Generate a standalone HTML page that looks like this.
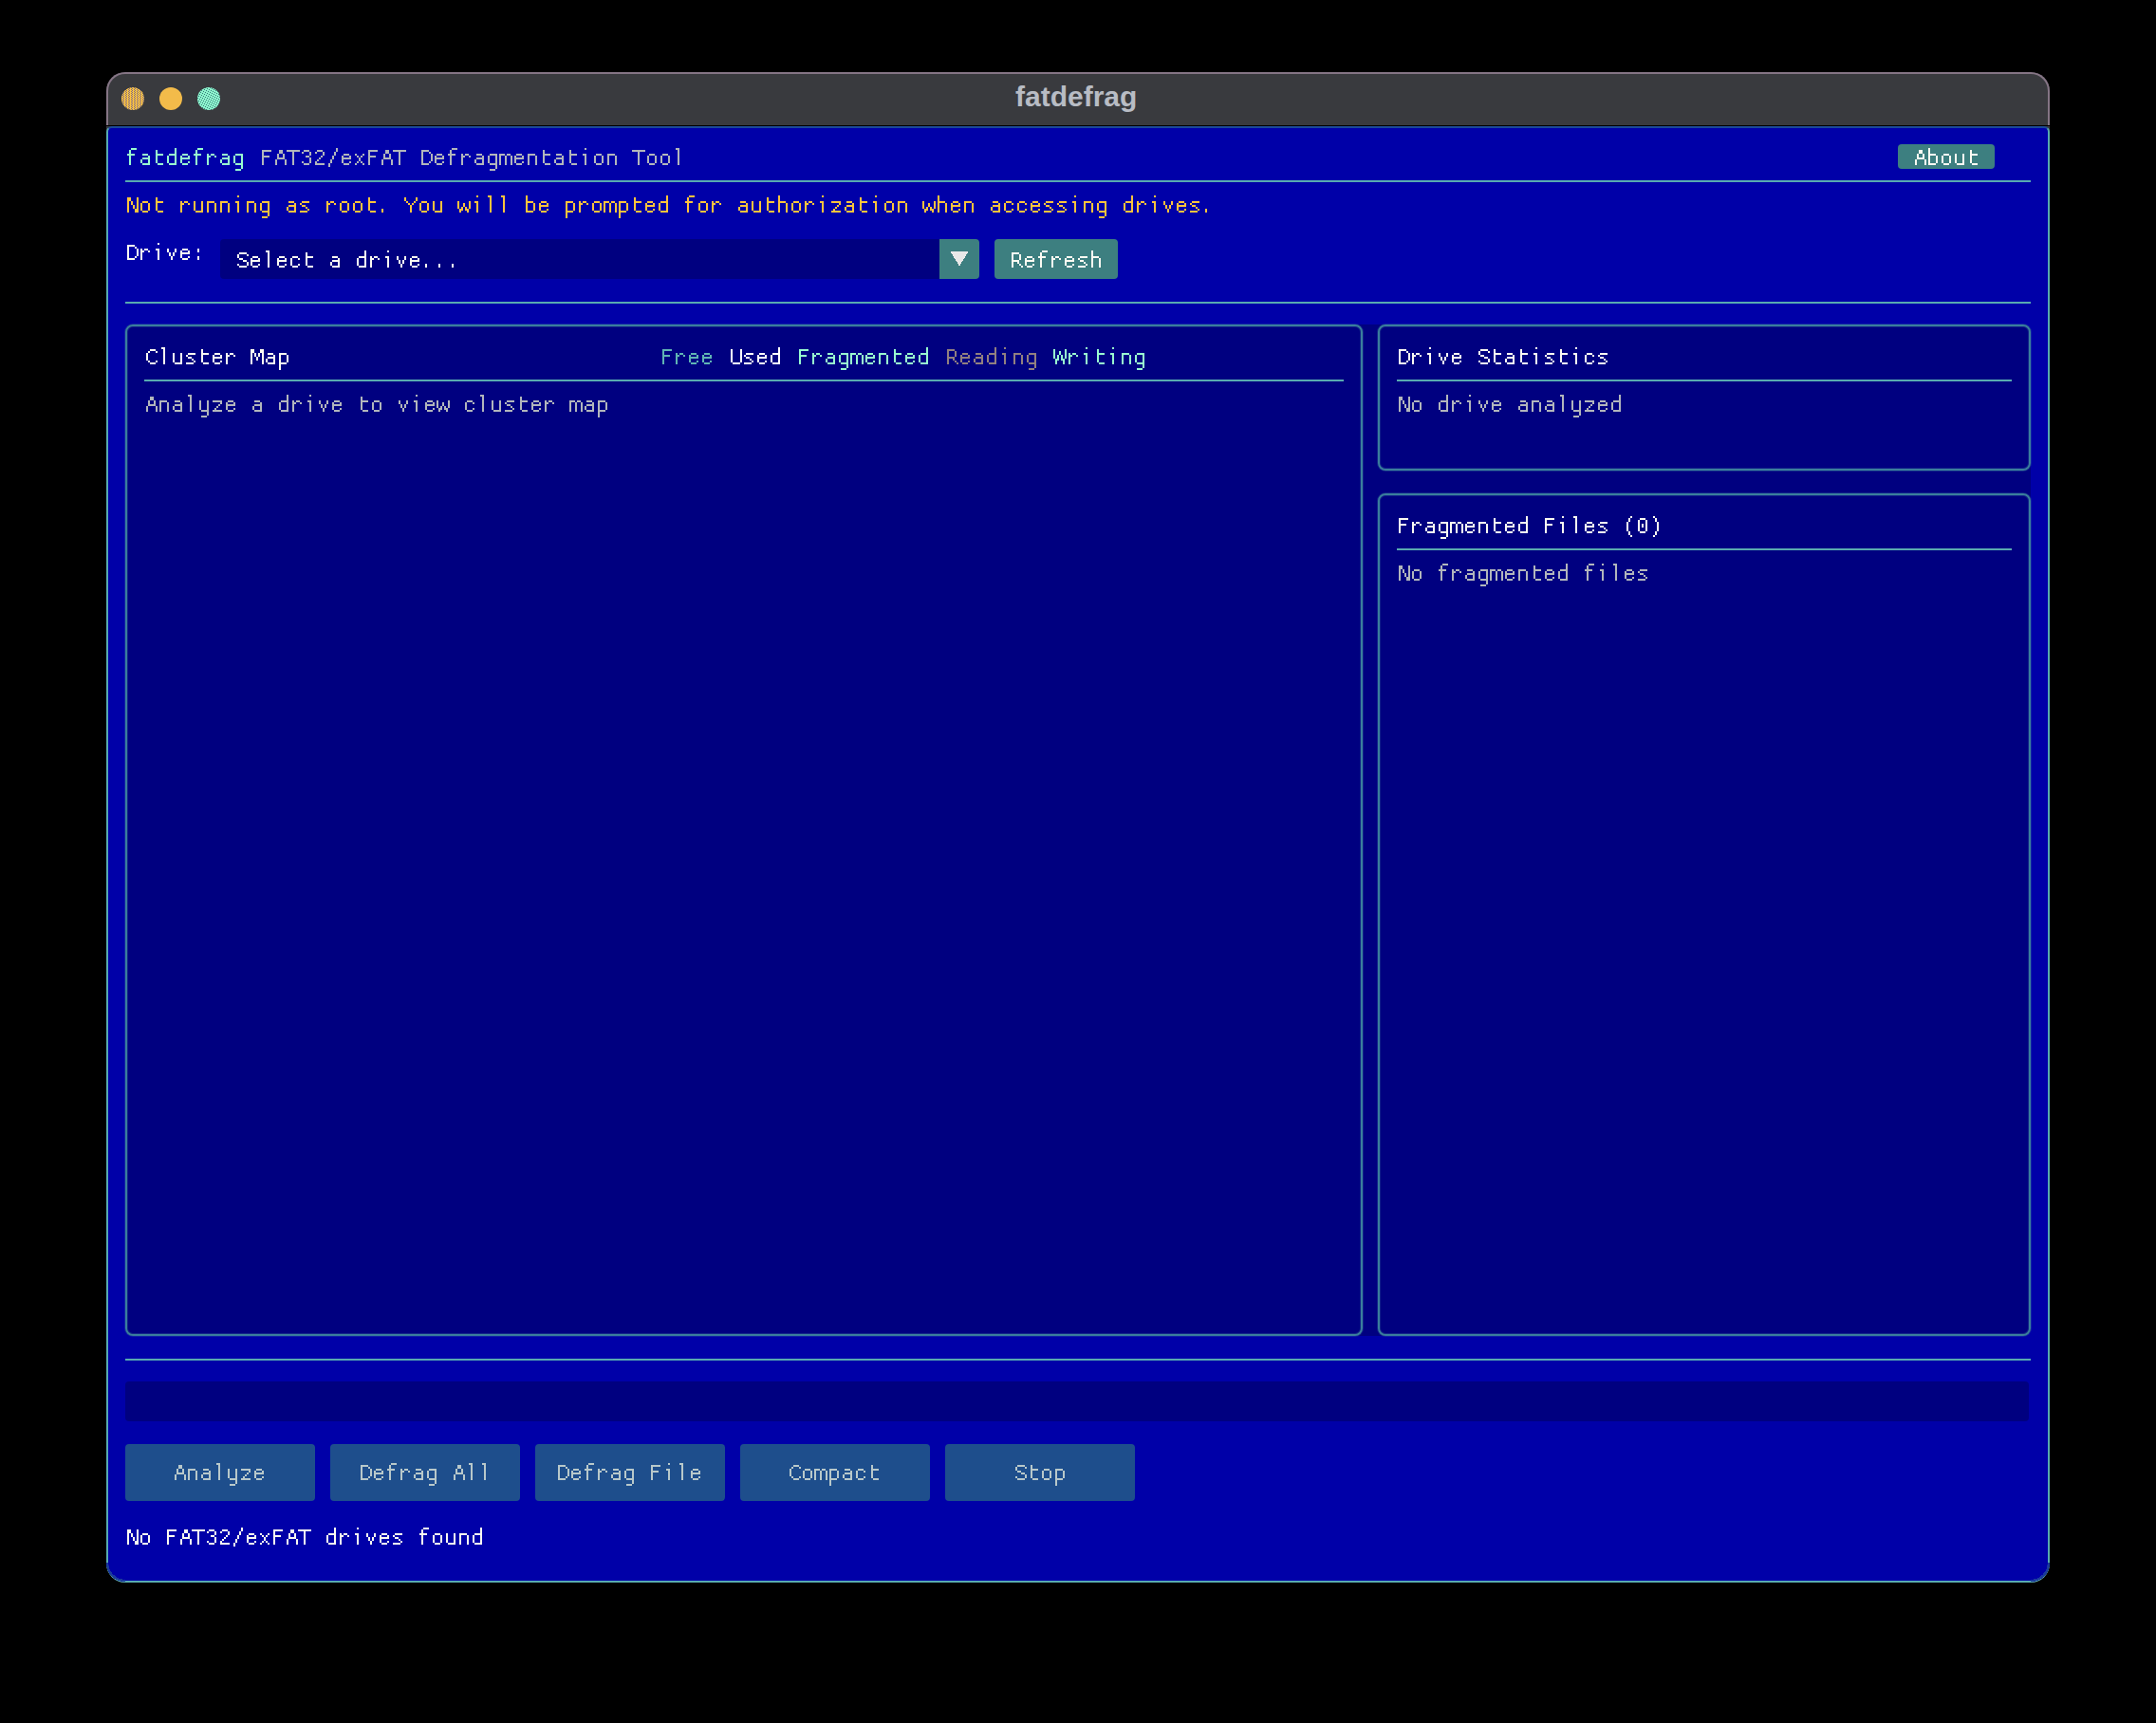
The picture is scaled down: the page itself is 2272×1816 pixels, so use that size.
<!DOCTYPE html>
<html><head><meta charset="utf-8">
<style>
html,body{margin:0;padding:0;width:2272px;height:1816px;background:#000;overflow:hidden}
*{box-sizing:border-box}
.a{position:absolute}
svg.a{shape-rendering:crispEdges;overflow:visible}
.line{position:absolute;height:2px;background:#58aab0}
.panel{position:absolute;border:2px solid #3a7e9c;box-shadow:0 0 0 1px rgba(66,136,162,0.25),inset 0 0 0 1px rgba(66,136,162,0.25);border-radius:8px;background:#000080}
.btn{position:absolute;background:#3d7f80;border-radius:4px}
.dbtn{position:absolute;background:#1e4e8c;border-radius:4px;width:200px;height:60px;top:1522px}
</style></head><body>
<svg width="0" height="0" style="position:absolute"><defs>
<path id="g78" d="M2 4h4v2h-4zM12 4h2v2h-2zM2 6h4v2h-4zM12 6h2v2h-2zM2 8h2v2h-2zM6 8h2v2h-2zM12 8h2v2h-2zM2 10h2v2h-2zM6 10h2v2h-2zM12 10h2v2h-2zM2 12h2v2h-2zM8 12h2v2h-2zM12 12h2v2h-2zM2 14h2v2h-2zM8 14h2v2h-2zM12 14h2v2h-2zM2 16h2v2h-2zM10 16h4v2h-4zM2 18h2v2h-2zM10 18h4v2h-4z"/>
<path id="g111" d="M4 8h6v2h-6zM2 10h2v2h-2zM10 10h2v2h-2zM2 12h2v2h-2zM10 12h2v2h-2zM2 14h2v2h-2zM10 14h2v2h-2zM2 16h2v2h-2zM10 16h2v2h-2zM4 18h6v2h-6z"/>
<path id="g116" d="M4 4h2v2h-2zM4 6h2v2h-2zM4 8h8v2h-8zM4 10h2v2h-2zM4 12h2v2h-2zM4 14h2v2h-2zM4 16h2v2h-2zM6 18h6v2h-6z"/>
<path id="g114" d="M2 8h2v2h-2zM6 8h4v2h-4zM2 10h4v2h-4zM10 10h2v2h-2zM2 12h2v2h-2zM2 14h2v2h-2zM2 16h2v2h-2zM2 18h2v2h-2z"/>
<path id="g117" d="M2 8h2v2h-2zM10 8h2v2h-2zM2 10h2v2h-2zM10 10h2v2h-2zM2 12h2v2h-2zM10 12h2v2h-2zM2 14h2v2h-2zM10 14h2v2h-2zM2 16h2v2h-2zM10 16h2v2h-2zM4 18h8v2h-8z"/>
<path id="g110" d="M2 8h8v2h-8zM2 10h2v2h-2zM10 10h2v2h-2zM2 12h2v2h-2zM10 12h2v2h-2zM2 14h2v2h-2zM10 14h2v2h-2zM2 16h2v2h-2zM10 16h2v2h-2zM2 18h2v2h-2zM10 18h2v2h-2z"/>
<path id="g105" d="M6 2h2v2h-2zM4 8h4v2h-4zM6 10h2v2h-2zM6 12h2v2h-2zM6 14h2v2h-2zM6 16h2v2h-2zM6 18h2v2h-2z"/>
<path id="g103" d="M4 8h8v2h-8zM2 10h2v2h-2zM10 10h2v2h-2zM2 12h2v2h-2zM10 12h2v2h-2zM2 14h2v2h-2zM10 14h2v2h-2zM2 16h2v2h-2zM10 16h2v2h-2zM4 18h8v2h-8zM10 20h2v2h-2zM10 22h2v2h-2zM4 24h6v2h-6z"/>
<path id="g97" d="M4 8h6v2h-6zM10 10h2v2h-2zM4 12h8v2h-8zM2 14h2v2h-2zM10 14h2v2h-2zM2 16h2v2h-2zM10 16h2v2h-2zM4 18h8v2h-8z"/>
<path id="g115" d="M4 8h8v2h-8zM2 10h2v2h-2zM4 12h4v2h-4zM8 14h2v2h-2zM10 16h2v2h-2zM2 18h8v2h-8z"/>
<path id="g46" d="M4 16h2v2h-2zM4 18h2v2h-2z"/>
<path id="g89" d="M0 4h2v2h-2zM12 4h2v2h-2zM0 6h2v2h-2zM12 6h2v2h-2zM2 8h2v2h-2zM10 8h2v2h-2zM4 10h2v2h-2zM8 10h2v2h-2zM6 12h2v2h-2zM6 14h2v2h-2zM6 16h2v2h-2zM6 18h2v2h-2z"/>
<path id="g119" d="M0 8h2v2h-2zM12 8h2v2h-2zM0 10h2v2h-2zM6 10h2v2h-2zM12 10h2v2h-2zM0 12h2v2h-2zM6 12h2v2h-2zM12 12h2v2h-2zM0 14h2v2h-2zM4 14h2v2h-2zM8 14h2v2h-2zM12 14h2v2h-2zM2 16h4v2h-4zM8 16h4v2h-4zM2 18h2v2h-2zM10 18h2v2h-2z"/>
<path id="g108" d="M4 2h4v2h-4zM6 4h2v2h-2zM6 6h2v2h-2zM6 8h2v2h-2zM6 10h2v2h-2zM6 12h2v2h-2zM6 14h2v2h-2zM6 16h2v2h-2zM6 18h2v2h-2z"/>
<path id="g98" d="M2 2h2v2h-2zM2 4h2v2h-2zM2 6h2v2h-2zM2 8h8v2h-8zM2 10h2v2h-2zM10 10h2v2h-2zM2 12h2v2h-2zM10 12h2v2h-2zM2 14h2v2h-2zM10 14h2v2h-2zM2 16h2v2h-2zM10 16h2v2h-2zM2 18h8v2h-8z"/>
<path id="g101" d="M4 8h6v2h-6zM2 10h2v2h-2zM10 10h2v2h-2zM2 12h10v2h-10zM2 14h2v2h-2zM2 16h2v2h-2zM10 16h2v2h-2zM4 18h6v2h-6z"/>
<path id="g112" d="M2 8h8v2h-8zM2 10h2v2h-2zM10 10h2v2h-2zM2 12h2v2h-2zM10 12h2v2h-2zM2 14h2v2h-2zM10 14h2v2h-2zM2 16h2v2h-2zM10 16h2v2h-2zM2 18h8v2h-8zM2 20h2v2h-2zM2 22h2v2h-2zM2 24h2v2h-2z"/>
<path id="g109" d="M0 8h6v2h-6zM8 8h4v2h-4zM0 10h2v2h-2zM6 10h2v2h-2zM12 10h2v2h-2zM0 12h2v2h-2zM6 12h2v2h-2zM12 12h2v2h-2zM0 14h2v2h-2zM6 14h2v2h-2zM12 14h2v2h-2zM0 16h2v2h-2zM6 16h2v2h-2zM12 16h2v2h-2zM0 18h2v2h-2zM6 18h2v2h-2zM12 18h2v2h-2z"/>
<path id="g100" d="M10 2h2v2h-2zM10 4h2v2h-2zM10 6h2v2h-2zM4 8h8v2h-8zM2 10h2v2h-2zM10 10h2v2h-2zM2 12h2v2h-2zM10 12h2v2h-2zM2 14h2v2h-2zM10 14h2v2h-2zM2 16h2v2h-2zM10 16h2v2h-2zM4 18h8v2h-8z"/>
<path id="g102" d="M6 2h6v2h-6zM4 4h2v2h-2zM4 6h2v2h-2zM2 8h8v2h-8zM4 10h2v2h-2zM4 12h2v2h-2zM4 14h2v2h-2zM4 16h2v2h-2zM4 18h2v2h-2z"/>
<path id="g104" d="M2 2h2v2h-2zM2 4h2v2h-2zM2 6h2v2h-2zM2 8h8v2h-8zM2 10h2v2h-2zM10 10h2v2h-2zM2 12h2v2h-2zM10 12h2v2h-2zM2 14h2v2h-2zM10 14h2v2h-2zM2 16h2v2h-2zM10 16h2v2h-2zM2 18h2v2h-2zM10 18h2v2h-2z"/>
<path id="g122" d="M2 8h10v2h-10zM10 10h2v2h-2zM8 12h2v2h-2zM6 14h2v2h-2zM4 16h2v2h-2zM2 18h10v2h-10z"/>
<path id="g99" d="M4 8h6v2h-6zM2 10h2v2h-2zM10 10h2v2h-2zM2 12h2v2h-2zM2 14h2v2h-2zM2 16h2v2h-2zM10 16h2v2h-2zM4 18h6v2h-6z"/>
<path id="g118" d="M2 8h2v2h-2zM10 8h2v2h-2zM2 10h2v2h-2zM10 10h2v2h-2zM4 12h2v2h-2zM8 12h2v2h-2zM4 14h2v2h-2zM8 14h2v2h-2zM6 16h2v2h-2zM6 18h2v2h-2z"/>
<path id="g70" d="M2 4h10v2h-10zM2 6h2v2h-2zM2 8h2v2h-2zM2 10h8v2h-8zM2 12h2v2h-2zM2 14h2v2h-2zM2 16h2v2h-2zM2 18h2v2h-2z"/>
<path id="g65" d="M6 4h4v2h-4zM6 6h4v2h-4zM4 8h2v2h-2zM10 8h2v2h-2zM4 10h2v2h-2zM10 10h2v2h-2zM4 12h8v2h-8zM2 14h2v2h-2zM12 14h2v2h-2zM2 16h2v2h-2zM12 16h2v2h-2zM2 18h2v2h-2zM12 18h2v2h-2z"/>
<path id="g84" d="M0 4h14v2h-14zM6 6h2v2h-2zM6 8h2v2h-2zM6 10h2v2h-2zM6 12h2v2h-2zM6 14h2v2h-2zM6 16h2v2h-2zM6 18h2v2h-2z"/>
<path id="g51" d="M4 4h6v2h-6zM2 6h2v2h-2zM10 6h2v2h-2zM10 8h2v2h-2zM6 10h4v2h-4zM10 12h2v2h-2zM10 14h2v2h-2zM2 16h2v2h-2zM10 16h2v2h-2zM4 18h6v2h-6z"/>
<path id="g50" d="M4 4h6v2h-6zM2 6h2v2h-2zM10 6h2v2h-2zM10 8h2v2h-2zM8 10h2v2h-2zM6 12h2v2h-2zM4 14h2v2h-2zM2 16h2v2h-2zM2 18h10v2h-10z"/>
<path id="g47" d="M10 2h2v2h-2zM10 4h2v2h-2zM8 6h2v2h-2zM8 8h2v2h-2zM6 10h2v2h-2zM6 12h2v2h-2zM4 14h2v2h-2zM4 16h2v2h-2zM2 18h2v2h-2zM2 20h2v2h-2z"/>
<path id="g120" d="M2 8h2v2h-2zM10 8h2v2h-2zM4 10h2v2h-2zM8 10h2v2h-2zM6 12h2v2h-2zM6 14h2v2h-2zM4 16h2v2h-2zM8 16h2v2h-2zM2 18h2v2h-2zM10 18h2v2h-2z"/>
<path id="g68" d="M2 4h8v2h-8zM2 6h2v2h-2zM10 6h2v2h-2zM2 8h2v2h-2zM12 8h2v2h-2zM2 10h2v2h-2zM12 10h2v2h-2zM2 12h2v2h-2zM12 12h2v2h-2zM2 14h2v2h-2zM12 14h2v2h-2zM2 16h2v2h-2zM10 16h2v2h-2zM2 18h8v2h-8z"/>
<path id="g67" d="M6 4h6v2h-6zM4 6h2v2h-2zM12 6h2v2h-2zM2 8h2v2h-2zM2 10h2v2h-2zM2 12h2v2h-2zM2 14h2v2h-2zM4 16h2v2h-2zM12 16h2v2h-2zM6 18h6v2h-6z"/>
<path id="g77" d="M0 4h4v2h-4zM10 4h4v2h-4zM0 6h4v2h-4zM10 6h4v2h-4zM0 8h2v2h-2zM4 8h2v2h-2zM8 8h2v2h-2zM12 8h2v2h-2zM0 10h2v2h-2zM4 10h2v2h-2zM8 10h2v2h-2zM12 10h2v2h-2zM0 12h2v2h-2zM6 12h2v2h-2zM12 12h2v2h-2zM0 14h2v2h-2zM6 14h2v2h-2zM12 14h2v2h-2zM0 16h2v2h-2zM12 16h2v2h-2zM0 18h2v2h-2zM12 18h2v2h-2z"/>
<path id="g85" d="M2 4h2v2h-2zM12 4h2v2h-2zM2 6h2v2h-2zM12 6h2v2h-2zM2 8h2v2h-2zM12 8h2v2h-2zM2 10h2v2h-2zM12 10h2v2h-2zM2 12h2v2h-2zM12 12h2v2h-2zM2 14h2v2h-2zM12 14h2v2h-2zM2 16h2v2h-2zM12 16h2v2h-2zM4 18h8v2h-8z"/>
<path id="g82" d="M2 4h8v2h-8zM2 6h2v2h-2zM10 6h2v2h-2zM2 8h2v2h-2zM10 8h2v2h-2zM2 10h2v2h-2zM10 10h2v2h-2zM2 12h8v2h-8zM2 14h2v2h-2zM8 14h2v2h-2zM2 16h2v2h-2zM10 16h2v2h-2zM2 18h2v2h-2zM12 18h2v2h-2z"/>
<path id="g87" d="M0 4h2v2h-2zM12 4h2v2h-2zM0 6h2v2h-2zM6 6h2v2h-2zM12 6h2v2h-2zM0 8h2v2h-2zM6 8h2v2h-2zM12 8h2v2h-2zM0 10h2v2h-2zM4 10h2v2h-2zM8 10h2v2h-2zM12 10h2v2h-2zM0 12h2v2h-2zM4 12h2v2h-2zM8 12h2v2h-2zM12 12h2v2h-2zM2 14h4v2h-4zM8 14h4v2h-4zM2 16h2v2h-2zM10 16h2v2h-2zM2 18h2v2h-2zM10 18h2v2h-2z"/>
<path id="g83" d="M4 4h8v2h-8zM2 6h2v2h-2zM12 6h2v2h-2zM2 8h2v2h-2zM4 10h4v2h-4zM8 12h4v2h-4zM12 14h2v2h-2zM2 16h2v2h-2zM12 16h2v2h-2zM4 18h8v2h-8z"/>
<path id="g40" d="M8 2h2v2h-2zM6 4h2v2h-2zM6 6h2v2h-2zM4 8h2v2h-2zM4 10h2v2h-2zM4 12h2v2h-2zM4 14h2v2h-2zM4 16h2v2h-2zM6 18h2v2h-2zM6 20h2v2h-2zM8 22h2v2h-2z"/>
<path id="g41" d="M4 2h2v2h-2zM6 4h2v2h-2zM6 6h2v2h-2zM8 8h2v2h-2zM8 10h2v2h-2zM8 12h2v2h-2zM8 14h2v2h-2zM8 16h2v2h-2zM6 18h2v2h-2zM6 20h2v2h-2zM4 22h2v2h-2z"/>
<path id="g48" d="M4 4h6v2h-6zM2 6h2v2h-2zM10 6h2v2h-2zM2 8h2v2h-2zM10 8h2v2h-2zM2 10h2v2h-2zM6 10h2v2h-2zM10 10h2v2h-2zM2 12h2v2h-2zM6 12h2v2h-2zM10 12h2v2h-2zM2 14h2v2h-2zM10 14h2v2h-2zM2 16h2v2h-2zM10 16h2v2h-2zM4 18h6v2h-6z"/>
<path id="g58" d="M6 8h2v2h-2zM6 10h2v2h-2zM6 16h2v2h-2zM6 18h2v2h-2z"/>
<path id="g121" d="M2 8h2v2h-2zM10 8h2v2h-2zM2 10h2v2h-2zM10 10h2v2h-2zM2 12h2v2h-2zM10 12h2v2h-2zM2 14h2v2h-2zM10 14h2v2h-2zM2 16h2v2h-2zM10 16h2v2h-2zM4 18h8v2h-8zM10 20h2v2h-2zM10 22h2v2h-2zM4 24h6v2h-6z"/>
</defs></svg>
<!-- window -->
<div class="a" style="left:112px;top:76px;width:2048px;height:1592px;border-radius:20px;background:#393a3e"></div>
<div class="a" style="left:112px;top:76px;width:2048px;height:56px;border:2px solid #857585;border-bottom:none;border-radius:20px 20px 0 0;background:#393a3e"></div>
<div class="a" style="left:1070px;top:85px;font-family:'Liberation Sans',sans-serif;font-weight:bold;font-size:30px;line-height:34px;color:#b8bcc4">fatdefrag</div>
<!-- traffic lights -->
<svg class="a" style="left:120px;top:84px;shape-rendering:auto" width="120" height="40">
<defs>
<pattern id="zz" width="3" height="4" patternUnits="userSpaceOnUse">
<rect width="3" height="4" fill="#ffc43e"/>
<rect x="0" y="0" width="1" height="1" fill="#7a6a8a"/><rect x="1" y="1" width="1" height="1" fill="#7a6a8a"/><rect x="0" y="2" width="1" height="1" fill="#7a6a8a"/><rect x="1" y="3" width="1" height="1" fill="#7a6a8a"/>
</pattern>
<pattern id="dd" width="5" height="5" patternUnits="userSpaceOnUse">
<rect width="5" height="5" fill="#8cf4cc"/>
<rect x="0" y="0" width="1" height="1" fill="#3a7a7c"/><rect x="2" y="1" width="1" height="1" fill="#3a7a7c"/><rect x="4" y="2" width="1" height="1" fill="#3a7a7c"/><rect x="1" y="3" width="1" height="1" fill="#3a7a7c"/><rect x="3" y="4" width="1" height="1" fill="#3a7a7c"/>
</pattern>
</defs>
<circle cx="20" cy="20" r="12" fill="url(#zz)"/>
<circle cx="60" cy="20" r="12" fill="#f3bb4a"/>
<circle cx="100" cy="20" r="12" fill="url(#dd)"/>
</svg>
<div class="a" style="left:112px;top:132px;width:2048px;height:1px;background:#000"></div>
<!-- content -->
<div class="a" style="left:112px;top:133px;width:2048px;height:1535px;background:#0000a8;border:2px solid #58aab0;border-top-color:#1c4a98;border-radius:6px 6px 20px 20px"></div>

<div class="btn" style="left:2000px;top:152px;width:102px;height:26px"></div>
<div class="line" style="left:132px;top:190px;width:2008px"></div>
<div class="a" style="left:232px;top:252px;width:800px;height:42px;background:#000080;border-radius:4px"></div>
<div class="btn" style="left:990px;top:252px;width:42px;height:42px;border-radius:0 4px 4px 0"></div>
<svg class="a" style="left:990px;top:252px" width="42" height="42"><polygon points="11.5,13 30.5,13 21,28.5" fill="#e8e8e8"/></svg>
<div class="btn" style="left:1048px;top:252px;width:130px;height:42px"></div>
<div class="line" style="left:132px;top:318px;width:2008px"></div>

<div class="a" style="left:132px;top:342px;width:2008px;height:1066px;background:#000080;border-radius:8px"></div>
<div class="panel" style="left:132px;top:342px;width:1304px;height:1066px"></div>
<div class="panel" style="left:1452px;top:342px;width:688px;height:154px"></div>
<div class="panel" style="left:1452px;top:520px;width:688px;height:888px"></div>
<div class="line" style="left:152px;top:400px;width:1264px"></div>
<div class="line" style="left:1472px;top:400px;width:648px"></div>
<div class="line" style="left:1472px;top:578px;width:648px"></div>

<div class="line" style="left:132px;top:1432px;width:2008px"></div>
<div class="a" style="left:132px;top:1456px;width:2006px;height:42px;background:#000080;border-radius:4px"></div>
<div class="dbtn" style="left:132px"></div>
<div class="dbtn" style="left:348px"></div>
<div class="dbtn" style="left:564px"></div>
<div class="dbtn" style="left:780px"></div>
<div class="dbtn" style="left:996px"></div>
<svg class="a" style="left:112px;top:1647px" width="22" height="22"><path d="M1 0 A19 19 0 0 0 20 19" fill="none" stroke="#1a3a9c" stroke-width="2.4"/></svg>
<svg class="a" style="left:2138px;top:1647px" width="22" height="22"><path d="M21 0 A19 19 0 0 1 2 19" fill="none" stroke="#1a3a9c" stroke-width="2.4"/></svg>
<svg class="a" style="left:132px;top:154px" width="126" height="26" fill="#98fcd0"><use href="#g102" x="0"/><use href="#g97" x="14"/><use href="#g116" x="28"/><use href="#g100" x="42"/><use href="#g101" x="56"/><use href="#g102" x="70"/><use href="#g114" x="84"/><use href="#g97" x="98"/><use href="#g103" x="112"/></svg>
<svg class="a" style="left:274px;top:154px" width="448" height="26" fill="#b2b6bc"><use href="#g70" x="0"/><use href="#g65" x="14"/><use href="#g84" x="28"/><use href="#g51" x="42"/><use href="#g50" x="56"/><use href="#g47" x="70"/><use href="#g101" x="84"/><use href="#g120" x="98"/><use href="#g70" x="112"/><use href="#g65" x="126"/><use href="#g84" x="140"/><use href="#g68" x="168"/><use href="#g101" x="182"/><use href="#g102" x="196"/><use href="#g114" x="210"/><use href="#g97" x="224"/><use href="#g103" x="238"/><use href="#g109" x="252"/><use href="#g101" x="266"/><use href="#g110" x="280"/><use href="#g116" x="294"/><use href="#g97" x="308"/><use href="#g116" x="322"/><use href="#g105" x="336"/><use href="#g111" x="350"/><use href="#g110" x="364"/><use href="#g84" x="392"/><use href="#g111" x="406"/><use href="#g111" x="420"/><use href="#g108" x="434"/></svg>
<svg class="a" style="left:2016px;top:154px" width="70" height="26" fill="#fbfaf2"><use href="#g65" x="0"/><use href="#g98" x="14"/><use href="#g111" x="28"/><use href="#g117" x="42"/><use href="#g116" x="56"/></svg>
<svg class="a" style="left:132px;top:204px" width="1148" height="26" fill="#ffc43c"><use href="#g78" x="0"/><use href="#g111" x="14"/><use href="#g116" x="28"/><use href="#g114" x="56"/><use href="#g117" x="70"/><use href="#g110" x="84"/><use href="#g110" x="98"/><use href="#g105" x="112"/><use href="#g110" x="126"/><use href="#g103" x="140"/><use href="#g97" x="168"/><use href="#g115" x="182"/><use href="#g114" x="210"/><use href="#g111" x="224"/><use href="#g111" x="238"/><use href="#g116" x="252"/><use href="#g46" x="266"/><use href="#g89" x="294"/><use href="#g111" x="308"/><use href="#g117" x="322"/><use href="#g119" x="350"/><use href="#g105" x="364"/><use href="#g108" x="378"/><use href="#g108" x="392"/><use href="#g98" x="420"/><use href="#g101" x="434"/><use href="#g112" x="462"/><use href="#g114" x="476"/><use href="#g111" x="490"/><use href="#g109" x="504"/><use href="#g112" x="518"/><use href="#g116" x="532"/><use href="#g101" x="546"/><use href="#g100" x="560"/><use href="#g102" x="588"/><use href="#g111" x="602"/><use href="#g114" x="616"/><use href="#g97" x="644"/><use href="#g117" x="658"/><use href="#g116" x="672"/><use href="#g104" x="686"/><use href="#g111" x="700"/><use href="#g114" x="714"/><use href="#g105" x="728"/><use href="#g122" x="742"/><use href="#g97" x="756"/><use href="#g116" x="770"/><use href="#g105" x="784"/><use href="#g111" x="798"/><use href="#g110" x="812"/><use href="#g119" x="840"/><use href="#g104" x="854"/><use href="#g101" x="868"/><use href="#g110" x="882"/><use href="#g97" x="910"/><use href="#g99" x="924"/><use href="#g99" x="938"/><use href="#g101" x="952"/><use href="#g115" x="966"/><use href="#g115" x="980"/><use href="#g105" x="994"/><use href="#g110" x="1008"/><use href="#g103" x="1022"/><use href="#g100" x="1050"/><use href="#g114" x="1064"/><use href="#g105" x="1078"/><use href="#g118" x="1092"/><use href="#g101" x="1106"/><use href="#g115" x="1120"/><use href="#g46" x="1134"/></svg>
<svg class="a" style="left:132px;top:254px" width="84" height="26" fill="#fbfaf2"><use href="#g68" x="0"/><use href="#g114" x="14"/><use href="#g105" x="28"/><use href="#g118" x="42"/><use href="#g101" x="56"/><use href="#g58" x="70"/></svg>
<svg class="a" style="left:248px;top:262px" width="238" height="26" fill="#fbfaf2"><use href="#g83" x="0"/><use href="#g101" x="14"/><use href="#g108" x="28"/><use href="#g101" x="42"/><use href="#g99" x="56"/><use href="#g116" x="70"/><use href="#g97" x="98"/><use href="#g100" x="126"/><use href="#g114" x="140"/><use href="#g105" x="154"/><use href="#g118" x="168"/><use href="#g101" x="182"/><use href="#g46" x="196"/><use href="#g46" x="210"/><use href="#g46" x="224"/></svg>
<svg class="a" style="left:1064px;top:262px" width="98" height="26" fill="#fbfaf2"><use href="#g82" x="0"/><use href="#g101" x="14"/><use href="#g102" x="28"/><use href="#g114" x="42"/><use href="#g101" x="56"/><use href="#g115" x="70"/><use href="#g104" x="84"/></svg>
<svg class="a" style="left:152px;top:364px" width="154" height="26" fill="#fbfaf2"><use href="#g67" x="0"/><use href="#g108" x="14"/><use href="#g117" x="28"/><use href="#g115" x="42"/><use href="#g116" x="56"/><use href="#g101" x="70"/><use href="#g114" x="84"/><use href="#g77" x="112"/><use href="#g97" x="126"/><use href="#g112" x="140"/></svg>
<svg class="a" style="left:696px;top:364px" width="56" height="26" fill="#60b4b4"><use href="#g70" x="0"/><use href="#g114" x="14"/><use href="#g101" x="28"/><use href="#g101" x="42"/></svg>
<svg class="a" style="left:768px;top:364px" width="56" height="26" fill="#ffffff"><use href="#g85" x="0"/><use href="#g115" x="14"/><use href="#g101" x="28"/><use href="#g100" x="42"/></svg>
<svg class="a" style="left:840px;top:364px" width="140" height="26" fill="#98fcd0"><use href="#g70" x="0"/><use href="#g114" x="14"/><use href="#g97" x="28"/><use href="#g103" x="42"/><use href="#g109" x="56"/><use href="#g101" x="70"/><use href="#g110" x="84"/><use href="#g116" x="98"/><use href="#g101" x="112"/><use href="#g100" x="126"/></svg>
<svg class="a" style="left:996px;top:364px" width="98" height="26" fill="#918080"><use href="#g82" x="0"/><use href="#g101" x="14"/><use href="#g97" x="28"/><use href="#g100" x="42"/><use href="#g105" x="56"/><use href="#g110" x="70"/><use href="#g103" x="84"/></svg>
<svg class="a" style="left:1110px;top:364px" width="98" height="26" fill="#98fcd0"><use href="#g87" x="0"/><use href="#g114" x="14"/><use href="#g105" x="28"/><use href="#g116" x="42"/><use href="#g105" x="56"/><use href="#g110" x="70"/><use href="#g103" x="84"/></svg>
<svg class="a" style="left:152px;top:414px" width="490" height="26" fill="#b2b6bc"><use href="#g65" x="0"/><use href="#g110" x="14"/><use href="#g97" x="28"/><use href="#g108" x="42"/><use href="#g121" x="56"/><use href="#g122" x="70"/><use href="#g101" x="84"/><use href="#g97" x="112"/><use href="#g100" x="140"/><use href="#g114" x="154"/><use href="#g105" x="168"/><use href="#g118" x="182"/><use href="#g101" x="196"/><use href="#g116" x="224"/><use href="#g111" x="238"/><use href="#g118" x="266"/><use href="#g105" x="280"/><use href="#g101" x="294"/><use href="#g119" x="308"/><use href="#g99" x="336"/><use href="#g108" x="350"/><use href="#g117" x="364"/><use href="#g115" x="378"/><use href="#g116" x="392"/><use href="#g101" x="406"/><use href="#g114" x="420"/><use href="#g109" x="448"/><use href="#g97" x="462"/><use href="#g112" x="476"/></svg>
<svg class="a" style="left:1472px;top:364px" width="224" height="26" fill="#fbfaf2"><use href="#g68" x="0"/><use href="#g114" x="14"/><use href="#g105" x="28"/><use href="#g118" x="42"/><use href="#g101" x="56"/><use href="#g83" x="84"/><use href="#g116" x="98"/><use href="#g97" x="112"/><use href="#g116" x="126"/><use href="#g105" x="140"/><use href="#g115" x="154"/><use href="#g116" x="168"/><use href="#g105" x="182"/><use href="#g99" x="196"/><use href="#g115" x="210"/></svg>
<svg class="a" style="left:1472px;top:414px" width="238" height="26" fill="#b2b6bc"><use href="#g78" x="0"/><use href="#g111" x="14"/><use href="#g100" x="42"/><use href="#g114" x="56"/><use href="#g105" x="70"/><use href="#g118" x="84"/><use href="#g101" x="98"/><use href="#g97" x="126"/><use href="#g110" x="140"/><use href="#g97" x="154"/><use href="#g108" x="168"/><use href="#g121" x="182"/><use href="#g122" x="196"/><use href="#g101" x="210"/><use href="#g100" x="224"/></svg>
<svg class="a" style="left:1472px;top:542px" width="280" height="26" fill="#fbfaf2"><use href="#g70" x="0"/><use href="#g114" x="14"/><use href="#g97" x="28"/><use href="#g103" x="42"/><use href="#g109" x="56"/><use href="#g101" x="70"/><use href="#g110" x="84"/><use href="#g116" x="98"/><use href="#g101" x="112"/><use href="#g100" x="126"/><use href="#g70" x="154"/><use href="#g105" x="168"/><use href="#g108" x="182"/><use href="#g101" x="196"/><use href="#g115" x="210"/><use href="#g40" x="238"/><use href="#g48" x="252"/><use href="#g41" x="266"/></svg>
<svg class="a" style="left:1472px;top:592px" width="266" height="26" fill="#b2b6bc"><use href="#g78" x="0"/><use href="#g111" x="14"/><use href="#g102" x="42"/><use href="#g114" x="56"/><use href="#g97" x="70"/><use href="#g103" x="84"/><use href="#g109" x="98"/><use href="#g101" x="112"/><use href="#g110" x="126"/><use href="#g116" x="140"/><use href="#g101" x="154"/><use href="#g100" x="168"/><use href="#g102" x="196"/><use href="#g105" x="210"/><use href="#g108" x="224"/><use href="#g101" x="238"/><use href="#g115" x="252"/></svg>
<svg class="a" style="left:182px;top:1540px" width="98" height="26" fill="#b8c8ca"><use href="#g65" x="0"/><use href="#g110" x="14"/><use href="#g97" x="28"/><use href="#g108" x="42"/><use href="#g121" x="56"/><use href="#g122" x="70"/><use href="#g101" x="84"/></svg>
<svg class="a" style="left:378px;top:1540px" width="140" height="26" fill="#b8c8ca"><use href="#g68" x="0"/><use href="#g101" x="14"/><use href="#g102" x="28"/><use href="#g114" x="42"/><use href="#g97" x="56"/><use href="#g103" x="70"/><use href="#g65" x="98"/><use href="#g108" x="112"/><use href="#g108" x="126"/></svg>
<svg class="a" style="left:586px;top:1540px" width="154" height="26" fill="#b8c8ca"><use href="#g68" x="0"/><use href="#g101" x="14"/><use href="#g102" x="28"/><use href="#g114" x="42"/><use href="#g97" x="56"/><use href="#g103" x="70"/><use href="#g70" x="98"/><use href="#g105" x="112"/><use href="#g108" x="126"/><use href="#g101" x="140"/></svg>
<svg class="a" style="left:830px;top:1540px" width="98" height="26" fill="#b8c8ca"><use href="#g67" x="0"/><use href="#g111" x="14"/><use href="#g109" x="28"/><use href="#g112" x="42"/><use href="#g97" x="56"/><use href="#g99" x="70"/><use href="#g116" x="84"/></svg>
<svg class="a" style="left:1068px;top:1540px" width="56" height="26" fill="#b8c8ca"><use href="#g83" x="0"/><use href="#g116" x="14"/><use href="#g111" x="28"/><use href="#g112" x="42"/></svg>
<svg class="a" style="left:132px;top:1608px" width="378" height="26" fill="#fbfaf2"><use href="#g78" x="0"/><use href="#g111" x="14"/><use href="#g70" x="42"/><use href="#g65" x="56"/><use href="#g84" x="70"/><use href="#g51" x="84"/><use href="#g50" x="98"/><use href="#g47" x="112"/><use href="#g101" x="126"/><use href="#g120" x="140"/><use href="#g70" x="154"/><use href="#g65" x="168"/><use href="#g84" x="182"/><use href="#g100" x="210"/><use href="#g114" x="224"/><use href="#g105" x="238"/><use href="#g118" x="252"/><use href="#g101" x="266"/><use href="#g115" x="280"/><use href="#g102" x="308"/><use href="#g111" x="322"/><use href="#g117" x="336"/><use href="#g110" x="350"/><use href="#g100" x="364"/></svg>
</body></html>
